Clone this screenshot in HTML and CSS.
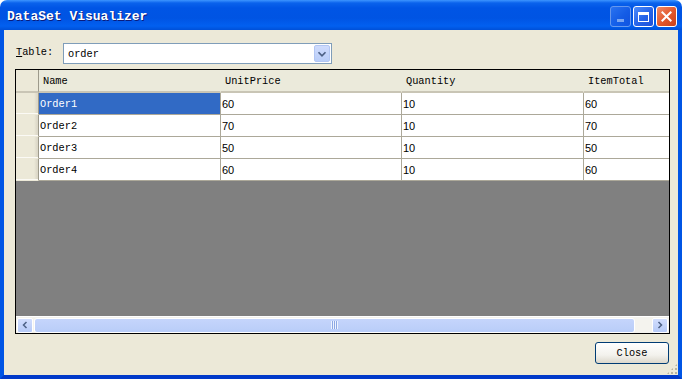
FILE: index.html
```html
<!doctype html>
<html>
  <head>
    <title>DataSet Visualizer</title>
    <meta name="viewport" content="width=device-width, initial-scale=1.0" />
    <link rel="stylesheet" href="styles.css">
  </head>
  <body>
    <div class="window">
      <div class="titlebar">
        <span class="title">DataSet Visualizer</span>
        <div class="controls">
          <span class="ctl min"><span class="min-bar"></span></span>
          <span class="ctl max"><span class="max-box"></span></span>
          <span class="ctl close">
            <svg viewBox="0 0 21 21" width="21" height="21">
              <path d="M6 6 L15 15 M15 6 L6 15" stroke="#fff" stroke-width="2.2" stroke-linecap="square" />
            </svg>
          </span>
        </div>
      </div>
      <div class="client">
        <div class="picker">
          <label class="picker-label"><u>T</u>able:</label>
          <div class="combo">
            <span class="combo-text">order</span>
            <span class="combo-drop">
              <svg viewBox="0 0 16 18" width="16" height="18">
                <path d="M4 7 L8 11 L12 7" fill="none" stroke="#4d6185" stroke-width="2" />
              </svg>
            </span>
          </div>
        </div>

        <div class="grid">
          <div class="grid-view">
            <div class="grid-row head">
              <div class="cell rh"></div>
              <div class="cell hc">Name</div>
              <div class="cell hc">UnitPrice</div>
              <div class="cell hc">Quantity</div>
              <div class="cell hc">ItemTotal</div>
            </div>
            <div class="grid-row">
              <div class="cell rh"></div>
              <div class="cell txt selected">Order1</div>
              <div class="cell num">60</div>
              <div class="cell num">10</div>
              <div class="cell num">60</div>
            </div>
            <div class="grid-row">
              <div class="cell rh"></div>
              <div class="cell txt">Order2</div>
              <div class="cell num">70</div>
              <div class="cell num">10</div>
              <div class="cell num">70</div>
            </div>
            <div class="grid-row">
              <div class="cell rh"></div>
              <div class="cell txt">Order3</div>
              <div class="cell num">50</div>
              <div class="cell num">10</div>
              <div class="cell num">50</div>
            </div>
            <div class="grid-row">
              <div class="cell rh"></div>
              <div class="cell txt">Order4</div>
              <div class="cell num">60</div>
              <div class="cell num">10</div>
              <div class="cell num">60</div>
            </div>
          </div>
          <div class="hscroll">
            <span class="sb-btn">
              <svg viewBox="0 0 16 16" width="16" height="16">
                <path d="M10 4 L6 8 L10 12" fill="none" stroke="#4d6185" stroke-width="2" />
              </svg>
            </span>
            <div class="sb-track">
              <div class="sb-thumb"><span class="grip-lines"></span></div>
            </div>
            <span class="sb-btn">
              <svg viewBox="0 0 16 16" width="16" height="16">
                <path d="M6 4 L10 8 L6 12" fill="none" stroke="#4d6185" stroke-width="2" />
              </svg>
            </span>
          </div>
        </div>

        <div class="footer">
          <button class="btn">Close</button>
        </div>
        <div class="size-grip"></div>
      </div>
    </div>
  </body>
</html>
```

FILE: styles.css
```css
body {
  margin: 0;
  background: #fff;
  font-family: "Liberation Mono", "DejaVu Sans Mono", monospace;
  font-size: 10.3px;
}
.window {
  width: 682px;
  height: 379px;
  display: flex;
  flex-direction: column;
}
.titlebar {
  height: 30px;
  flex: none;
  display: flex;
  align-items: center;
  justify-content: space-between;
  padding: 0 5px 0 7px;
  border-radius: 7px 7px 0 0;
  background: linear-gradient(to bottom, #3d95ff 0, #0a62ec 3px, #0055e5 8px, #0054e3 18px, #0260f0 26px, #0050d8 30px);
}
.title {
  color: #fff;
  font-weight: bold;
  font-size: 13px;
  padding-top: 2px;
  text-shadow: 1px 1px 0 #0a1c7c;
}
.controls {
  display: flex;
  gap: 2px;
  padding-top: 3px;
}
.ctl {
  width: 21px;
  height: 21px;
  box-sizing: border-box;
  border: 1px solid #fff;
  border-radius: 3px;
  display: flex;
  align-items: center;
  justify-content: center;
  background: linear-gradient(135deg, #4c8cfb, #2563e8 55%, #1f4fd8);
}
.ctl.min {
  opacity: 0.55;
  border-color: #b8cdf5;
}
.min-bar {
  width: 7px;
  height: 3px;
  background: #dbe6fc;
  margin-top: 8px;
}
.max-box {
  width: 11px;
  height: 10px;
  box-sizing: border-box;
  border: 1px solid #fff;
  border-top-width: 3px;
}
.ctl.close {
  background: linear-gradient(135deg, #f08a66, #e2562b 55%, #c8411b);
}
.client {
  flex: 1;
  position: relative;
  display: flex;
  flex-direction: column;
  background: #ece9d8;
  border: 4px solid #0055e5;
  border-top: none;
  border-bottom-color: #0039c9;
  padding: 13px 8px 11px 11px;
}
.picker {
  display: flex;
  align-items: center;
  height: 21px;
}
.picker-label {
  width: 47px;
  padding-left: 1px;
  margin-top: -4px;
}
.combo {
  width: 269px;
  height: 21px;
  box-sizing: border-box;
  border: 1px solid #7f9db9;
  background: #fff;
  display: flex;
  align-items: center;
  justify-content: space-between;
  padding: 0 1px 0 4px;
}
.combo-text {
  margin-top: 1px;
}
.combo-drop {
  width: 16px;
  height: 17px;
  border-radius: 2px;
  background: linear-gradient(#cfdcfd, #b9cdf8);
  border: 1px solid #b2c6f3;
  box-sizing: border-box;
  display: flex;
  align-items: center;
  justify-content: center;
}
.grid {
  margin-top: 5px;
  height: 265px;
  box-sizing: border-box;
  border: 1px solid #000;
  display: flex;
  flex-direction: column;
  width: 655px;
}
.grid-view {
  flex: 1;
  background: #808080;
  overflow: hidden;
}
.grid-row {
  display: grid;
  grid-template-columns: 23px 182px 181px 182px 120px;
  height: 22px;
}
.grid-row.head {
  height: 23px;
}
.cell {
  box-sizing: border-box;
  background: #fff;
  border-right: 1px solid #aca899;
  border-bottom: 1px solid #aca899;
  white-space: nowrap;
  overflow: hidden;
  display: flex;
  align-items: center;
  padding-left: 1px;
  padding-top: 1px;
}
.cell.rh {
  background: linear-gradient(to right, #ece9d8 18px, #dcd8c8 21px);
  border-right: 1px solid #9d9a8b;
  border-bottom: 1px solid #ece9d8;
  box-shadow: inset 0 -1px 0 #fbfaf5;
}
.head .cell {
  background: #ebeadb;
  border-bottom: 2px solid #c9c5b5;
  border-right: 1px solid #ebeadb;
}
.head .cell.rh {
  background: #ece9d8;
  border-right: 1px solid #9d9a8b;
  box-shadow: none;
}
.head .hc {
  padding-left: 4px;
  position: relative;
}
.head .hc::after {
  content: "";
  position: absolute;
  right: -1px;
  top: 4px;
  bottom: 3px;
  width: 1px;
  background: #c7c5b2;
}
.cell.num {
  font-family: "Liberation Sans", "DejaVu Sans", sans-serif;
  font-size: 11px;
}
.cell.selected {
  background: #316ac5;
  color: #fff;
}
.hscroll {
  height: 17px;
  flex: none;
  display: flex;
  align-items: center;
  background: #f4f3ee;
  border-top: 1px solid #fff;
  box-sizing: border-box;
  padding: 0 1px;
}
.sb-btn {
  width: 16px;
  height: 15px;
  box-sizing: border-box;
  border: 1px solid #fff;
  border-radius: 2px;
  background: linear-gradient(#d2defd, #b6caf7);
  display: flex;
  align-items: center;
  justify-content: center;
}
.sb-btn svg {
  width: 12px;
  height: 12px;
}
.sb-track {
  flex: 1;
  display: flex;
  padding: 0 17px 0 1px;
}
.sb-thumb {
  flex: 1;
  height: 15px;
  box-sizing: border-box;
  border: 1px solid #fff;
  border-radius: 3px;
  background: linear-gradient(#c5d5fc, #b9cdf8);
  display: flex;
  align-items: center;
  justify-content: center;
}
.grip-lines {
  width: 7px;
  height: 8px;
  background: repeating-linear-gradient(to right, #eef3fe 0, #eef3fe 1px, #8ca8e4 1px, #8ca8e4 2px);
}
.footer {
  margin-top: 8px;
  display: flex;
  justify-content: flex-end;
  padding-right: 1px;
}
.btn {
  width: 74px;
  height: 22px;
  font-family: "Liberation Mono", "DejaVu Sans Mono", monospace;
  font-size: 10.3px;
  color: #000;
  border: 1px solid #003c74;
  border-radius: 3px;
  background: linear-gradient(#ffffff, #f3f2ed 60%, #dcd8cc);
  padding: 0;
}
.size-grip {
  position: absolute;
  right: 1px;
  bottom: 1px;
  width: 10px;
  height: 10px;
  background:
    radial-gradient(circle at 1px 1px, #b9b59f 1px, transparent 1.2px) 0 0 / 4px 4px;
  clip-path: polygon(100% 0, 100% 100%, 0 100%);
}
```
